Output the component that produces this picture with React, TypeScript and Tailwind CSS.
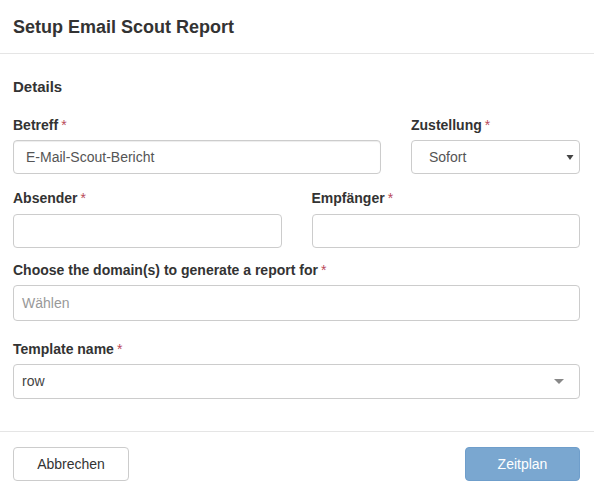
import React from "react";

const font = { fontFamily: '"Liberation Sans", Arial, sans-serif' };

function Label({ text }: { text: string }) {
  return (
    <label className="block h-5 text-[14px] leading-5 font-bold text-[#333] mb-[5px]">
      {text}
      <span className="text-[#b94a5a] font-normal ml-[3px]">*</span>
    </label>
  );
}

function Caret({ className }: { className?: string }) {
  return (
    <svg width="10" height="5" viewBox="0 0 10 5" className={className}>
      <path d="M0 0 L10 0 L5 5 Z" fill="#888" />
    </svg>
  );
}

export default function App() {
  return (
    <div className="w-[594px] h-[494px] bg-white text-[#333]" style={font}>
      {/* Header */}
      <div className="h-[54px] border-b border-[#e5e5e5] flex items-center pl-[13px] pr-[14px]">
        <h4 className="text-[18px] font-bold leading-[26px]">
          Setup Email Scout Report
        </h4>
      </div>

      {/* Body */}
      <div className="h-[377px] pl-[13px] pr-[14px] pt-[23px]">
        <div className="text-[15px] font-bold leading-5 mb-[18px]">Details</div>

        <div className="grid grid-cols-12 gap-x-[30px]">
          <div className="col-span-8">
            <Label text="Betreff" />
            <div className="h-[34px] border border-[#ccc] rounded-[4px] px-3 flex items-center text-[14px] text-[#555] shadow-[inset_0_1px_1px_rgba(0,0,0,0.075)]">
              E-Mail-Scout-Bericht
            </div>
          </div>
          <div className="col-span-4">
            <Label text="Zustellung" />
            <div className="h-[34px] border border-[#ccc] rounded-[4px] pl-[17px] pr-[5px] flex items-center justify-between text-[14px] text-[#555]">
              <span>Sofort</span>
              <svg width="8" height="5" viewBox="0 0 8 5">
                <path d="M0.5 0 L7.5 0 L4 5 Z" fill="#444" />
              </svg>
            </div>
          </div>
        </div>

        <div className="grid grid-cols-2 gap-x-[30px] mt-[14px]">
          <div>
            <label className="block h-5 text-[14px] leading-5 font-bold text-[#333] mb-[6px]">
              Absender<span className="text-[#b94a5a] font-normal ml-[3px]">*</span>
            </label>
            <div className="h-[34px] border border-[#ccc] rounded-[4px]" />
          </div>
          <div>
            <label className="block h-5 text-[14px] leading-5 font-bold text-[#333] mb-[6px]">
              Empfänger<span className="text-[#b94a5a] font-normal ml-[3px]">*</span>
            </label>
            <div className="h-[34px] border border-[#ccc] rounded-[4px]" />
          </div>
        </div>

        <div className="mt-[12px]">
          <Label text="Choose the domain(s) to generate a report for" />
          <div className="h-[36px] border border-[#ccc] rounded-[4px] px-2 flex items-center text-[14px] text-[#999]">
            Wählen
          </div>
        </div>

        <div className="mt-[18px]">
          <Label text="Template name" />
          <div className="h-[35px] border border-[#ccc] rounded-[4px] pl-2 pr-[15px] flex items-center justify-between text-[14px] text-[#444]">
            <span>row</span>
            <Caret />
          </div>
        </div>
      </div>

      {/* Footer */}
      <div className="border-t border-[#e5e5e5] pl-[13px] pr-[14px] pt-[15px] flex justify-between">
        <button className="w-[116px] h-[34px] border border-[#ccc] rounded-[4px] bg-white text-[14px] text-[#333]">
          Abbrechen
        </button>
        <button className="w-[115px] h-[34px] border border-[#6f9ecb] rounded-[4px] bg-[#7aa7d0] text-[14px] text-white">
          Zeitplan
        </button>
      </div>
    </div>
  );
}
